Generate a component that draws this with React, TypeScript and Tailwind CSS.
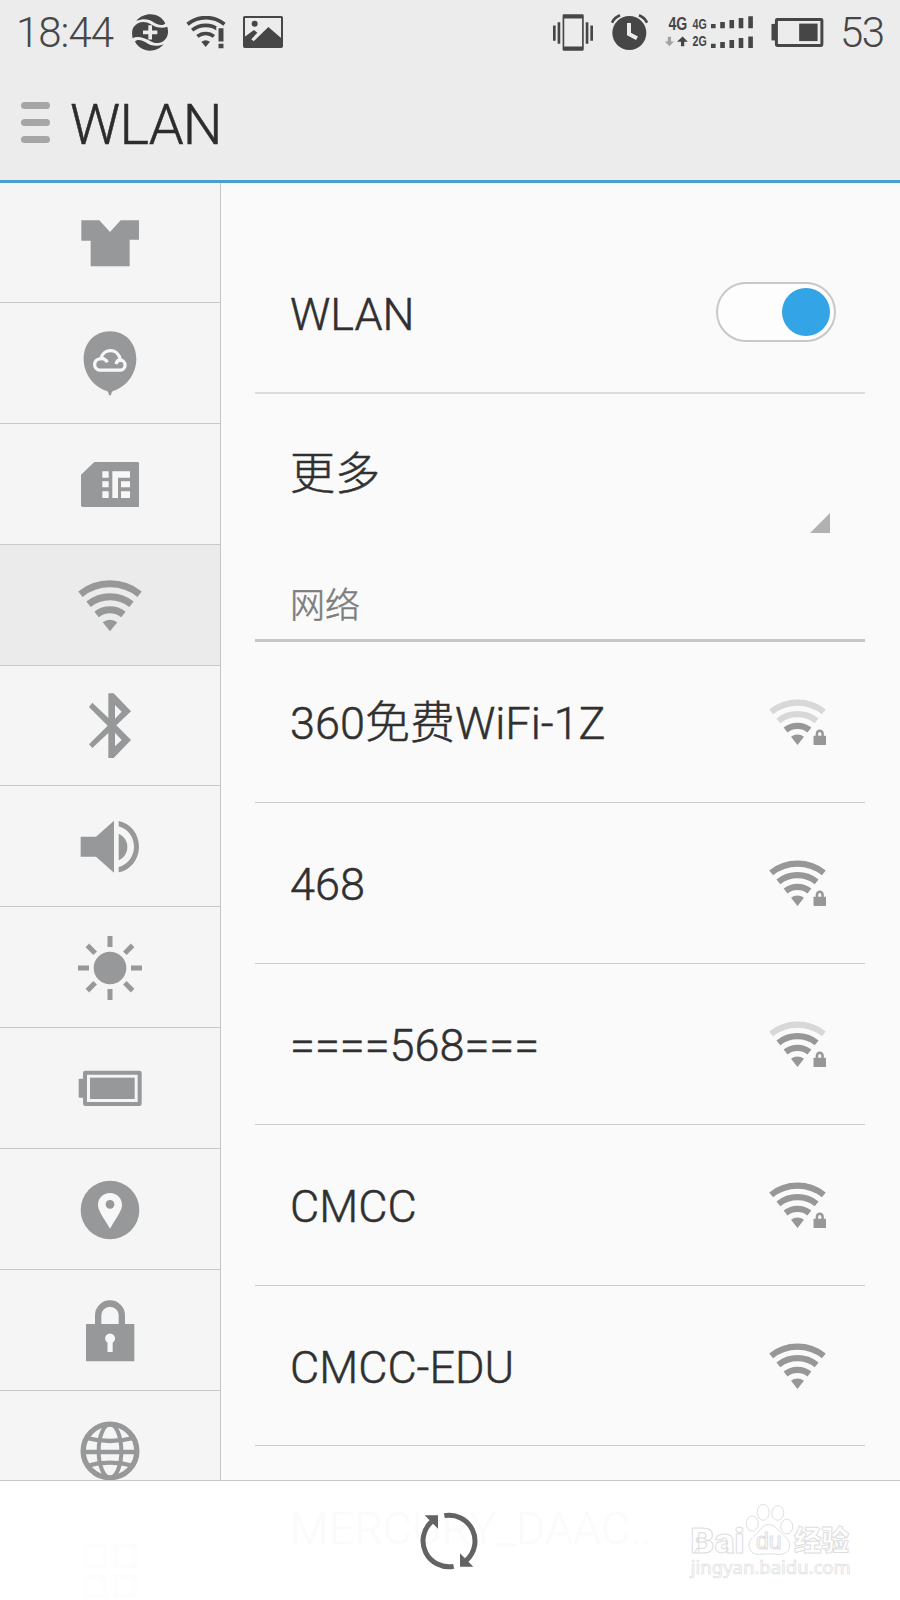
import React from 'react';
import clsx from 'clsx';

interface Network {
  ssid: string;
  level: number;
  locked: boolean;
}

interface SideItem {
  id: string;
  icon: React.ElementType;
}

const networks: Network[] = [
  { ssid: '360免费WiFi-1Z', level: 2, locked: true },
  { ssid: '468', level: 4, locked: true },
  { ssid: '====568===', level: 3, locked: true },
  { ssid: 'CMCC', level: 4, locked: true },
  { ssid: 'CMCC-EDU', level: 4, locked: false },
  { ssid: 'MERCURY_DAAC..', level: 2, locked: true },
];

function SideSvg({ children }: { children: React.ReactNode }) {
  return (
    <svg viewBox="0 0 192 192" className="h-16 w-16 shrink-0 overflow-visible fill-[#979899]">
      {children}
    </svg>
  );
}

function ShirtIcon() {
  return (
    <SideSvg>
      <path d="M10 28H64L96 63L128 28H183V86H155V166H38V89H10Z" />
    </SideSvg>
  );
}

function CloudIcon() {
  return (
    <SideSvg>
      <path d="M96 1C142 1 175 36 175 84C175 128 146 168 105 180C101 183 100 187 99 193H93C92 187 91 183 87 180C46 168 17 128 17 84C17 36 50 1 96 1Z" />
      <g fill="none" stroke="#f7f7f7" strokeWidth="10">
        <path d="M88 94C84 84 74 81 66 83.5A17 17 0 0 0 68 117.5H125A15 15 0 0 0 127 87C120 87 116 91 114 99" />
        <path d="M68 84C76 50 122 50 127 88" />
      </g>
    </SideSvg>
  );
}

function SimIcon() {
  return (
    <SideSvg>
      <path d="M49 30H179Q183 30 183 34V161Q183 165 179 165H14Q9 165 9 160V68Z" />
      <path
        fill="#f7f7f7"
        d="M73 58h19v19h-19zM73 88h19v18h-19zM73 118h19v20h-19zM103 58h53v19h-36v61h-17zM129 88h27v18h-27zM129 118h27v20h-27z"
      />
    </SideSvg>
  );
}

// arcs share one centre at the tip of the fan
function WifiArcs({ level, color, dim }: { level: number; color: string; dim: string }) {
  return (
    <>
      <g fill="none" strokeWidth="21">
        <path d="M7.3 63.5A142.5 142.5 0 0 1 184.7 63.5" stroke={level > 3 ? color : dim} />
        <path d="M31.6 94A103.5 103.5 0 0 1 160.4 94" stroke={level > 2 ? color : dim} />
        <path d="M55.8 124.5A64.5 64.5 0 0 1 136.2 124.5" stroke={level > 1 ? color : dim} />
      </g>
      <path d="M96 175L74.2 147.6A35 35 0 0 1 117.8 147.6Z" fill={color} />
    </>
  );
}

function WifiIcon() {
  return (
    <SideSvg>
      <WifiArcs level={4} color="#979899" dim="#d8d8d8" />
    </SideSvg>
  );
}

function BluetoothIcon() {
  return (
    <SideSvg>
      <path
        fillRule="evenodd"
        d="M91 1H107L159 55L115 97L159 141L107 195H91V120L43 165L33 154L89 98L33 42L43 29L91 75ZM111 36V77L131 56ZM111 119V160L131 141Z"
      />
    </SideSvg>
  );
}

function SoundIcon() {
  return (
    <SideSvg>
      <path d="M8 68H54L108 20V176L54 128H8Z" />
      <path d="M122 59C138 66 148 81 148 99S138 132 122 139Z" />
      <path d="M122 21C158 28 183 60 183 98S158 168 122 175V159C148 152 168 128 168 98S148 44 122 37Z" />
    </SideSvg>
  );
}

function SunIcon() {
  return (
    <SideSvg>
      <circle cx="96" cy="99" r="49" />
      {[0, 45, 90, 135, 180, 225, 270, 315].map((deg) => (
        <rect key={deg} x="88.5" y="3" width="15" height="33" transform={`rotate(${deg} 96 99)`} />
      ))}
    </SideSvg>
  );
}

function BatteryIcon() {
  return (
    <SideSvg>
      <rect x="21" y="50" width="164" height="94" rx="1" fill="none" stroke="#979899" strokeWidth="12" />
      <rect x="36" y="65" width="134" height="64" />
      <path d="M15 68H5Q2 68 2 71V122Q2 125 5 125H15Z" />
    </SideSvg>
  );
}

function PlaceIcon() {
  return (
    <SideSvg>
      <circle cx="96" cy="99" r="88" />
      <path fill="#f7f7f7" d="M96 48C117 48 132 64 132 84C132 100 118 118 96 155C74 118 60 100 60 84C60 64 75 48 96 48Z" />
      <circle cx="96" cy="82" r="13" />
    </SideSvg>
  );
}

function LockIcon() {
  return (
    <SideSvg>
      <path d="M60.5 82V52A35.5 35.5 0 0 1 131.5 52V82" fill="none" stroke="#979899" strokeWidth="19" />
      <rect x="24" y="78" width="145" height="112" rx="2" />
      <path fill="#f7f7f7" d="M88.5 162V134A15 15 0 1 1 104 134V162Z" />
    </SideSvg>
  );
}

function GlobeIcon() {
  return (
    <SideSvg>
      <g fill="none" stroke="#979899" strokeWidth="12">
        <circle cx="96" cy="96" r="80.5" strokeWidth="16" />
        <ellipse cx="96" cy="96" rx="34" ry="80" />
        <path d="M14 99H178" strokeWidth="14" />
        <path d="M25 57Q96 75 167 57M25 141Q96 121 167 141" strokeWidth="13" />
      </g>
    </SideSvg>
  );
}

function AppsIcon() {
  return (
    <SideSvg>
      <path
        fillRule="evenodd"
        d="M16 15h72v72h-72zM31 30v42h42v-42zM106 15h72v72h-72zM121 30v42h42v-42zM16 105h72v72h-72zM31 120v42h42v-42zM106 105h72v72h-72zM121 120v42h42v-42z"
      />
    </SideSvg>
  );
}

const sideItems: SideItem[] = [
  { id: 'theme', icon: ShirtIcon },
  { id: 'account', icon: CloudIcon },
  { id: 'sim', icon: SimIcon },
  { id: 'wlan', icon: WifiIcon },
  { id: 'bluetooth', icon: BluetoothIcon },
  { id: 'sound', icon: SoundIcon },
  { id: 'display', icon: SunIcon },
  { id: 'battery', icon: BatteryIcon },
  { id: 'location', icon: PlaceIcon },
  { id: 'security', icon: LockIcon },
  { id: 'language', icon: GlobeIcon },
  { id: 'apps', icon: AppsIcon },
];

function StatusBar() {
  return (
    <div className="flex h-16 items-center text-[42px] font-light leading-none text-[#464646]">
      <span className="ml-4 mt-0.5 w-[116px] tracking-[-1px]">18:44</span>
      <svg viewBox="0 0 108 110" className="h-[37px] w-9 fill-[#464646]">
        <path d="M13 20C36 -8 84 -6 100 28C90 36 78 32 66 25C50 14 34 12 13 20Z" />
        <path d="M4 40C18 20 40 20 56 30C72 40 90 44 106 38C109 50 109 60 104 70C92 90 72 90 56 81C38 71 16 64 2 72C-1 60 0 48 4 40Z" />
        <path d="M95 90C72 118 26 116 9 82C18 74 30 78 42 85C58 96 74 98 95 90Z" />
        <path d="M49 33h11v16h16v11H60v16H49V60H33V49h16z" fill="#ececec" />
      </svg>
      <svg viewBox="0 0 120 100" className="ml-[18px] h-[33px] w-10">
        <g fill="none" stroke="#464646" strokeWidth="11">
          <path d="M4 25A88 88 0 0 1 116 25" />
          <path d="M18 43A65 65 0 0 1 100 43" />
          <path d="M34 62A39 39 0 0 1 84 62" />
        </g>
        <path d="M59 94L46 78A22 22 0 0 1 72 78Z" fill="#464646" />
        <path d="M91 32H120V100H91Z" fill="#ececec" />
        <path d="M98 37h15v40h-15zM98 84h15v14h-15z" fill="#464646" />
      </svg>
      <svg viewBox="0 0 120 96" className="ml-[17px] h-8 w-10 fill-[#464646]">
        <rect x="3" y="3" width="114" height="90" rx="2" fill="none" stroke="#464646" strokeWidth="6" />
        <circle cx="35" cy="23" r="9" />
        <path d="M3 93V64L33 42L43 50L25 70L32 76L76 33L117 68V93Z" />
      </svg>

      <svg viewBox="0 0 121 110" className="ml-[270px] h-[37px] w-10 fill-[#464646]">
        <path fillRule="evenodd" d="M32 0H90Q93 0 93 4V106Q93 110 90 110H32Q29 110 29 106V4Q29 0 32 0ZM34 13V97H88V13Z" />
        <path d="M0 34h8v46H0zM14 24h8v65h-8zM99 24h8v65h-8zM113 34h8v46h-8z" />
      </svg>
      <svg viewBox="0 0 111 108" className="ml-[18px] h-9 w-[37px]">
        <circle cx="55" cy="57" r="51" fill="#464646" />
        <path d="M54 27V60L78 73" fill="none" stroke="#ececec" strokeWidth="12" />
        <path d="M3 26Q10 11 27 4M108 26Q101 11 84 4" fill="none" stroke="#464646" strokeWidth="8" />
      </svg>
      <svg viewBox="0 0 270 100" className="ml-4 h-[33px] w-[90px] overflow-visible fill-[#464646] font-['Liberation_Sans'] font-bold">
        <text x="12" y="41" fontSize="53" textLength="57" lengthAdjust="spacingAndGlyphs">4G</text>
        <text x="85" y="38" fontSize="42" textLength="43" lengthAdjust="spacingAndGlyphs">4G</text>
        <text x="85" y="92" fontSize="42" textLength="43" lengthAdjust="spacingAndGlyphs">2G</text>
        <path d="M10 63h10v14h9L15 92L1 77h9z" fill="#a3a3a3" />
        <path d="M50 92h10V78h11L55 62L38 78h12z" />
        <path d="M141 24h14v13h-14zM169 18h14v19h-14zM197 12h14v25h-14zM225 6h14v31h-14zM254 1h14v36h-14z" />
        <path d="M141 84h14v13h-14zM169 79h14v18h-14zM197 73h14v24h-14zM225 67h14v30h-14zM254 62h14v35h-14z" />
      </svg>
      <svg viewBox="0 0 158 88" className="ml-[17px] h-[29px] w-[53px] fill-[#464646]">
        <rect x="15" y="4.5" width="138" height="79" rx="2" fill="none" stroke="#464646" strokeWidth="9" />
        <rect x="84" y="17" width="56" height="53" />
        <path d="M0 18h12v50H0z" />
      </svg>
      <span className="ml-4 mt-0.5 tracking-[-1.5px]">53</span>
    </div>
  );
}

function NetworkRow({ ssid, level, locked }: Network) {
  return (
    <li className="flex h-[160.9px] shrink-0 items-center justify-between border-b border-[#cbcbcb] pl-[35px] pr-[39px]">
      <span className="mt-1">{ssid}</span>
      <svg viewBox="0 0 192 192" className="h-[57px] w-[57px] overflow-visible">
        <WifiArcs level={level} color="#979797" dim="#d8d8d8" />
        {locked && (
          <>
            <path d="M161.5 148V137A9.5 10 0 0 1 180.5 137V148" fill="none" stroke="#979797" strokeWidth="8.5" />
            <rect x="150" y="144" width="42" height="31" rx="2" fill="#979797" />
          </>
        )}
      </svg>
    </li>
  );
}

function Watermark() {
  return (
    <svg
      viewBox="0 0 490 235"
      className="absolute left-[690px] top-[21px] h-[78px] w-[163px] overflow-visible fill-white stroke-[#dedede] font-['Liberation_Sans'] font-bold"
      strokeWidth="3"
    >
      <text x="0" y="155" fontSize="108" className="font-['Roboto'] font-black" textLength="164" lengthAdjust="spacingAndGlyphs">Bai</text>
      <ellipse cx="187" cy="65" rx="18" ry="23" />
      <ellipse cx="220" cy="31" rx="18" ry="24" />
      <ellipse cx="264" cy="33" rx="18" ry="22" />
      <ellipse cx="291" cy="74" rx="18" ry="22" />
      <path d="M237 68C256 68 264 84 277 96C292 108 300 118 299 132C298 150 284 158 266 158C252 156 222 156 208 158C190 158 177 148 177 130C178 114 188 106 199 97C212 84 218 68 237 68Z" />
      <text x="198" y="143" fontSize="70" fontWeight="400" textLength="78" lengthAdjust="spacingAndGlyphs">du</text>
      <text x="313" y="148" fontSize="84" className="font-['Noto_Sans_CJK_SC'] font-black" textLength="166" lengthAdjust="spacingAndGlyphs">经验</text>
      <text x="2" y="217" fontSize="54" fontWeight="400" strokeWidth="2" className="font-['Noto_Sans']" textLength="482" lengthAdjust="spacingAndGlyphs">
        jingyan.baidu.com
      </text>
    </svg>
  );
}

export default function App() {
  return (
    <div className="relative flex h-[1600px] w-[900px] flex-col overflow-hidden bg-[#fafafa] font-['Roboto','Noto_Sans_CJK_SC',sans-serif]">
      <header className="h-[183px] shrink-0 border-b-[3px] border-[#4a9fcb] bg-[#ececec]">
        <StatusBar />
        <div className="flex h-[117px] items-center pl-[20.5px]">
          <div className="flex w-[29px] flex-col gap-[10px]">
            <span className="h-[7px] rounded-full bg-[#a6a6a6]" />
            <span className="h-[7px] rounded-full bg-[#a6a6a6]" />
            <span className="h-[7px] rounded-full bg-[#a6a6a6]" />
          </div>
          <h1 className="ml-[20.5px] mt-[5px] text-[56px] font-light leading-none tracking-[-0.8px] text-[#2c2c2c] [-webkit-text-stroke:0.5px_#2c2c2c]">
            WLAN
          </h1>
        </div>
      </header>

      <div className="flex min-h-0 flex-1">
        <nav className="flex w-[221px] shrink-0 flex-col border-r border-[#c6c6c6] bg-[#f5f5f5]">
          {sideItems.map((item) => (
            <div
              key={item.id}
              className={clsx(
                'flex h-[120.85px] shrink-0 items-center justify-center border-b border-[#c9c9c9] first:h-[120px]',
                item.id === 'wlan' && 'bg-[#ebebeb]'
              )}
            >
              <item.icon />
            </div>
          ))}
        </nav>

        <main className="flex flex-1 flex-col overflow-hidden pl-[34px] pr-[35px] pt-[49px] text-[45px] font-light leading-none text-[#303030] [-webkit-text-stroke:0.5px_currentColor]">
          <div className="flex h-[162px] shrink-0 items-center justify-between border-b-2 border-[#dcdcdc] pl-[35px] pr-[29px]">
            <span className="mt-1">WLAN</span>
            <div className="flex h-[60px] w-[120px] items-center justify-end rounded-full border-[2.5px] border-[#c8c8c8] bg-[#fdfdfd] pr-1">
              <span className="h-12 w-12 rounded-full bg-[#33a4e6]" />
            </div>
          </div>
          <div className="flex h-[160px] shrink-0 items-center justify-between pl-[35px] pr-[35px]">
            <span>更多</span>
            <svg viewBox="0 0 20 20" className="mt-[97px] h-5 w-5">
              <path d="M20 0V20H0Z" fill="#b1b1b1" />
            </svg>
          </div>
          <div className="flex h-[88px] shrink-0 items-center border-b-[3px] border-[#c6c6c6] pl-[35px] pt-[19px] text-[35px] text-[#7c7c7c]">
            网络
          </div>
          <ul className="flex flex-col">
            {networks.map((network) => (
              <NetworkRow key={network.ssid} {...network} />
            ))}
          </ul>
        </main>
      </div>

      <footer className="absolute inset-x-0 bottom-0 flex h-[120px] items-center justify-center border-t border-[#c6c6c6] bg-white/98">
        <svg viewBox="0 0 192 192" className="mr-0.5 h-16 w-16">
          <g fill="none" stroke="#636363" strokeWidth="15">
            <path d="M110 172A77.5 77.5 0 0 1 44 38" />
            <path d="M82 20A77.5 77.5 0 0 1 148 154" />
          </g>
          <path d="M23 18.5H63V59.5ZM169 173.5H129V132.5Z" fill="#636363" />
        </svg>
        <Watermark />
      </footer>
    </div>
  );
}
